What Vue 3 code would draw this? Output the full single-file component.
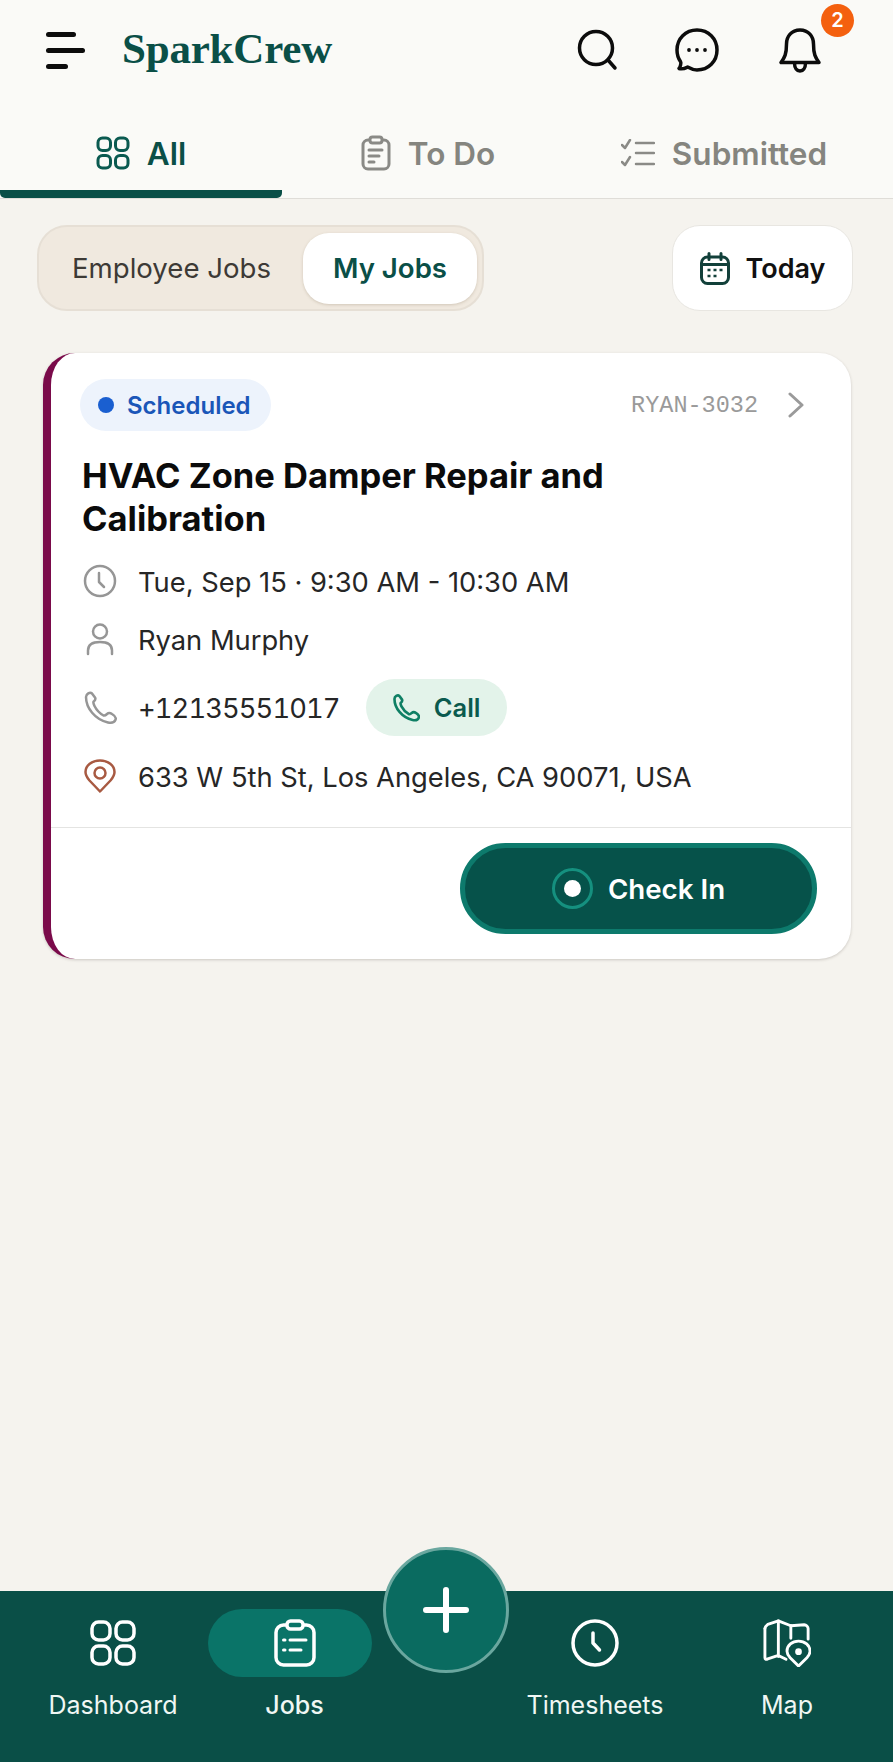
<template>
	<div class="app">
		<header class="header">
			<div class="burger"><span></span><span></span><span></span></div>
			<div class="logo">SparkCrew</div>
			<div class="header-icons">
				<svg width="46" height="46" viewBox="0 0 46 46" class="ic-black">
					<circle cx="21" cy="21" r="16.500" />
					<path d="M33 33l7 8" />
				</svg>
				<svg width="46" height="46" viewBox="0 0 46 46" class="ic-black">
					<path d="M23 3C11.500 3 3 11.500 3 23c0 4.500 1.300 8.500 3.600 11.800.8 1.200-.4 5.300-1.600 6.700 2.600.9 7-.6 8.600-1.400C16.400 41.700 19.600 43 23 43c11.500 0 20-8.500 20-20S34.500 3 23 3z" />
					<circle class="dot" cx="15" cy="23" r="1.900" />
					<circle class="dot" cx="23" cy="23" r="1.900" />
					<circle class="dot" cx="31" cy="23" r="1.900" />
				</svg>
				<div class="bell">
					<svg width="46" height="46" viewBox="0 0 46 46" class="ic-black">
						<path d="M23 3c-8.500 0-13.500 6.500-13.500 14 0 10-1.800 13.500-5.500 18.500h38C38.300 30.500 36.500 27 36.500 17 36.500 9.500 31.500 3 23 3z" />
						<path d="M17.500 36c0 5 2.500 8 5.500 8s5.500-3 5.500-8" />
					</svg>
					<span class="bell-count">2</span>
				</div>
			</div>
		</header>

		<nav class="tabs">
			<div class="tab tab-active">
				<svg width="34" height="34" viewBox="0 0 34 34" class="ic-green">
					<rect x="2" y="2" width="12.500" height="12.500" rx="4.500" />
					<rect x="19.500" y="2" width="12.500" height="12.500" rx="4.500" />
					<rect x="2" y="19.500" width="12.500" height="12.500" rx="4.500" />
					<rect x="19.500" y="19.500" width="12.500" height="12.500" rx="4.500" />
				</svg>
				All
			</div>
			<div class="tab">
				<svg width="30" height="36" viewBox="0 0 30 36" class="ic-grey">
					<rect x="2" y="5" width="26" height="29" rx="5" />
					<rect class="clip" x="9" y="2" width="12" height="6" rx="2.500" />
					<path d="M8 15h13M8 21h10M8 27h5" />
				</svg>
				To Do
			</div>
			<div class="tab">
				<svg width="34" height="28" viewBox="0 0 34 28" class="ic-grey thin">
					<path d="M1 6l3 3 5-8M1 23l3 3 5-8M15 4h18M15 14h18M15 25h18" />
				</svg>
				Submitted
			</div>
		</nav>

		<main class="content">
			<div class="filters">
				<div class="segment">
					<div class="seg-item">Employee Jobs</div>
					<div class="seg-item seg-active">My Jobs</div>
				</div>
				<button class="today">
					<svg width="30" height="33" viewBox="0 0 30 33" class="ic-dark">
						<rect x="1.500" y="5" width="27" height="26.500" rx="6" />
						<path d="M1.500 12.500h27M9 1.500v6M21 1.500v6" />
						<path class="sq" d="M7.500 18h3M13.500 18h3M19.500 18h3M7.500 24h3M13.500 24h3" />
					</svg>
					Today
				</button>
			</div>

			<section class="card">
				<div class="card-body">
					<div class="card-top">
						<span class="status"><i></i>Scheduled</span>
						<span class="job-id">RYAN-3032</span>
						<svg width="18" height="26" viewBox="0 0 18 26" class="chev">
							<path d="M3 2l12 11L3 24" />
						</svg>
					</div>
					<h2 class="title">HVAC Zone Damper Repair and<br />Calibration</h2>
					<div class="rows">
						<div class="row">
							<svg width="34" height="34" viewBox="0 0 34 34" class="ic-row">
								<circle cx="17" cy="17" r="15" />
								<path d="M16 9v9l5 5" />
							</svg>
							<span>Tue, Sep 15 · 9:30 AM - 10:30 AM</span>
						</div>
						<div class="row">
							<svg width="34" height="34" viewBox="0 0 34 34" class="ic-row">
								<circle cx="17" cy="9.500" r="7" />
								<path d="M5 32v-3.500C5 22.500 10 20 17 20s12 2.500 12 8.500V32" />
							</svg>
							<span>Ryan Murphy</span>
						</div>
						<div class="row">
							<svg width="34" height="34" viewBox="0 0 34 34" class="ic-row">
								<path d="M3 6c0-3 4-5.500 6-3.500l3 4c1 1.500 0 3-1.500 4.300C10 12 10.500 13 11.500 15c2.300 4.500 5.500 7.500 9 9.500 1.500.5 2.500-.5 3.500-1.500 1.500-1.300 3-1.300 5 0 3 1.800 4.500 3.500 3.500 5.800-1 2.500-4 3.500-7.500 2.700C12 28.500 3 17 3 6z" />
							</svg>
							<span class="phone">+12135551017</span>
							<button class="call">
								<svg width="28" height="28" viewBox="0 0 34 34" class="ic-teal">
									<path d="M3 6c0-3 4-5.500 6-3.500l3 4c1 1.500 0 3-1.500 4.300C10 12 10.500 13 11.500 15c2.300 4.500 5.500 7.500 9 9.500 1.500.5 2.500-.5 3.500-1.500 1.500-1.300 3-1.300 5 0 3 1.800 4.500 3.500 3.500 5.800-1 2.500-4 3.500-7.500 2.700C12 28.500 3 17 3 6z" />
								</svg>
								Call
							</button>
						</div>
						<div class="row">
							<svg width="34" height="34" viewBox="0 0 34 34" class="ic-row ic-pin">
								<path d="M17 32.500L6.500 21.500C3.500 18 2.500 15.500 2.500 13 2.500 6.500 9 1.500 17 1.500S31.500 6.500 31.500 13c0 2.500-1 5-4 8.500z" />
								<circle cx="17" cy="14" r="5.500" />
							</svg>
							<span>633 W 5th St, Los Angeles, CA 90071, USA</span>
						</div>
					</div>
				</div>
				<div class="card-foot">
					<button class="checkin">
						<span class="radio"><i></i></span>
						Check In
					</button>
				</div>
			</section>
		</main>

		<footer class="bottom">
			<div class="nav-item">
				<div class="nav-icon">
					<svg width="46" height="46" viewBox="0 0 46 46" class="ic-white">
						<rect x="2" y="2" width="18" height="18" rx="6.500" />
						<rect x="26" y="2" width="18" height="18" rx="6.500" />
						<rect x="2" y="26" width="18" height="18" rx="6.500" />
						<rect x="26" y="26" width="18" height="18" rx="6.500" />
					</svg>
				</div>
				<span>Dashboard</span>
			</div>
			<div class="nav-item nav-active">
				<div class="nav-icon nav-pill">
					<svg width="42" height="48" viewBox="0 0 42 48" class="ic-white">
						<rect x="2" y="6" width="38" height="40" rx="7.500" />
						<rect class="clip" x="13" y="2" width="16" height="8" rx="3.500" />
						<path class="thinner" d="M16 21h16M16 31h11" />
						<path class="thinner" d="M9.500 21h1.500M9.500 31h1.500" />
					</svg>
				</div>
				<span>Jobs</span>
			</div>
			<div class="nav-gap"></div>
			<div class="nav-item">
				<div class="nav-icon">
					<svg width="48" height="48" viewBox="0 0 48 48" class="ic-white">
						<circle cx="24" cy="24" r="22" />
						<path d="M22 14v10l6.500 7" />
					</svg>
				</div>
				<span>Timesheets</span>
			</div>
			<div class="nav-item">
				<div class="nav-icon">
					<svg width="48" height="48" viewBox="0 0 50 50" class="ic-white map">
						<path d="M2 10c0-2 1-3 3-4.500L16 2l13 5 14-1c2 0 4 2 4 4v11" />
						<path d="M16 2v37M29 7v13M2 10v30c0 2 1 2.500 3 1.500L16 38l8 4" />
						<path d="M37 49L28 40c-2-2.500-3-4.500-3-6.500C25 27.500 30.500 23 37 23s12 4.500 12 10.500c0 2-1 4-3 6.500z" />
						<circle class="dot" cx="37" cy="34" r="3.500" />
					</svg>
				</div>
				<span>Map</span>
			</div>
			<button class="fab">
				<svg width="46" height="46" viewBox="0 0 46 46">
					<path d="M23 3v40M3 23h40" />
				</svg>
			</button>
		</footer>
	</div>
</template>

<script setup>
</script>

<style>
html,
body {
	margin: 0;
	background: #f5f3ee;
}
</style>

<style scoped>
.app {
	display: flex;
	flex-direction: column;
	min-height: 1762px;
	font-family: Inter, "Noto Sans", sans-serif;
	color: #222;
	background: #f5f3ee;
}

svg {
	display: block;
	flex: none;
	fill: none;
	stroke-linecap: round;
	stroke-linejoin: round;
}

button {
	font-family: inherit;
	border: 0;
	cursor: pointer;
}

.ic-black { stroke: #0c0c0c; stroke-width: 3.500; }
.ic-black .dot { fill: #0c0c0c; stroke: none; }
.ic-green { stroke: #0a5a50; stroke-width: 3; }
.ic-grey { stroke: #8a8a86; stroke-width: 3; }
.ic-grey .clip { fill: #fafaf7; }
.ic-grey.thin { stroke-width: 2.500; }
.ic-dark { stroke: #12403a; stroke-width: 3; }
.ic-dark .sq { stroke-width: 2.500; stroke-linecap: butt; }
.ic-row { stroke: #969696; stroke-width: 2.500; }
.ic-pin { stroke: #a85a42; }
.ic-teal { stroke: #0e7f64; stroke-width: 3.200; }
.ic-white { stroke: #fff; stroke-width: 3.500; }
.ic-white .clip { fill: #0a7468; }
.ic-white .thinner { stroke-width: 3; }
.ic-white .dot { fill: #fff; stroke: none; }
.ic-white.map { stroke-width: 3; }

.header {
	display: flex;
	align-items: center;
	height: 100px;
	padding-left: 46px;
	background: #fafaf7;
}

.burger {
	display: flex;
	flex-direction: column;
	gap: 11px;
	width: 39px;
}

.burger span {
	display: block;
	height: 5px;
	border-radius: 3px;
	background: #0c0c0c;
}

.burger span:nth-child(1) { width: 30px; }
.burger span:nth-child(3) { width: 22px; }

.logo {
	margin-left: 37px;
	margin-bottom: 4px;
	font-family: "Liberation Serif", serif;
	font-size: 43px;
	font-weight: 700;
	letter-spacing: -0.2px;
	color: #0a4f47;
}

.header-icons {
	display: flex;
	align-items: center;
	gap: 53px;
	margin-left: auto;
	margin-right: 70px;
}

.bell {
	position: relative;
	margin-left: 4px;
}

.bell-count {
	position: absolute;
	top: -23px;
	right: -31px;
	width: 33px;
	height: 33px;
	border-radius: 50%;
	background: #f4600f;
	color: #fff;
	font-size: 20px;
	font-weight: 600;
	line-height: 33px;
	text-align: center;
}

.tabs {
	display: grid;
	grid-template-columns: 282px 292px 300px;
	height: 98px;
	background: #fafaf7;
	border-bottom: 1px solid #dfddd8;
}

.tab {
	display: flex;
	align-items: center;
	justify-content: center;
	gap: 17px;
	padding-top: 8px;
	font-size: 31.500px;
	font-weight: 600;
	color: #85857f;
	box-sizing: border-box;
}

.tab-active {
	color: #0a4f47;
	border-bottom: 8px solid #0a4f47;
	border-radius: 0 0 5px 5px;
	padding-top: 16px;
}

.content {
	flex: 1;
	padding: 26px 40px 0 37px;
}

.filters {
	display: flex;
	align-items: center;
	justify-content: space-between;
}

.segment {
	display: flex;
	align-items: center;
	justify-content: space-between;
	box-sizing: border-box;
	width: 447px;
	height: 86px;
	padding: 0 5px 0 33px;
	border: 2px solid #e6dfd5;
	border-radius: 30px;
	background: #f0e9df;
}

.seg-item {
	font-size: 27.600px;
	color: #3d3a36;
}

.seg-active {
	display: flex;
	align-items: center;
	justify-content: center;
	width: 174px;
	height: 71px;
	border-radius: 26px;
	background: #fff;
	box-shadow: 0 1px 3px rgba(120, 100, 70, 0.25);
	font-weight: 600;
	color: #0a4f47;
}

.today {
	display: flex;
	align-items: center;
	justify-content: center;
	gap: 16px;
	box-sizing: border-box;
	width: 181px;
	height: 86px;
	border: 1px solid #e8e6e1;
	border-radius: 28px;
	background: #fff;
	font-size: 27px;
	font-weight: 600;
	color: #111;
}

.card {
	margin: 42px 2px 0 6px;
	border-left: 8px solid #7a0a4a;
	border-radius: 32px;
	background: #fff;
	box-shadow: 0 1px 3px rgba(60, 50, 40, 0.22);
}

.card-body {
	padding: 26px 34px 33px 29px;
	border-bottom: 1px solid #e4e4e2;
}

.card-top {
	display: flex;
	align-items: center;
}

.status {
	display: flex;
	align-items: center;
	gap: 13px;
	height: 52px;
	padding: 0 20px 0 18px;
	border-radius: 26px;
	background: #edf3fc;
	font-size: 24px;
	font-weight: 600;
	color: #1a56b8;
}

.status i {
	width: 16px;
	height: 16px;
	border-radius: 50%;
	background: #1a5fd0;
}

.job-id {
	margin-left: auto;
	font-family: "Liberation Mono", monospace;
	font-size: 23.500px;
	color: #9a9a9a;
}

.chev {
	margin-left: 29px;
	margin-right: 12px;
	stroke: #9a9a9a;
	stroke-width: 3;
}

.title {
	margin: 23px 0 23px 2px;
	font-size: 34.500px;
	font-weight: 700;
	line-height: 43px;
	color: #0b0b0b;
}

.rows {
	display: flex;
	flex-direction: column;
	gap: 22px;
}

.row {
	display: flex;
	align-items: center;
	gap: 21px;
	min-height: 36px;
	padding-left: 3px;
	font-size: 27.300px;
	color: #262626;
}

.row > span {
	padding-top: 2px;
}

.phone {
	font-variant-numeric: tabular-nums;
	letter-spacing: -0.900px;
}

.call {
	display: flex;
	align-items: center;
	justify-content: center;
	gap: 14px;
	width: 141px;
	height: 57px;
	margin-left: 5px;
	border-radius: 29px;
	background: #e3f3ea;
	font-size: 25.500px;
	font-weight: 600;
	color: #0a5a4e;
}

.card-foot {
	display: flex;
	justify-content: flex-end;
	padding: 15px 34px 25px 0;
}

.checkin {
	display: flex;
	align-items: center;
	justify-content: center;
	gap: 15px;
	box-sizing: border-box;
	width: 357px;
	height: 91px;
	border: 5px solid #0d7a6c;
	border-radius: 46px;
	background: #06524a;
	font-size: 27.700px;
	font-weight: 600;
	color: #fff;
}

.radio {
	display: flex;
	align-items: center;
	justify-content: center;
	box-sizing: border-box;
	width: 41px;
	height: 41px;
	border: 3px solid #15907f;
	border-radius: 50%;
}

.radio i {
	width: 17px;
	height: 17px;
	border-radius: 50%;
	background: #fff;
}

.bottom {
	position: relative;
	display: grid;
	grid-template-columns: 190px 164px 133px 180px 204px;
	align-items: start;
	box-sizing: border-box;
	height: 171px;
	padding: 18px 0 0 18px;
	background: #0a4f47;
}

.nav-item {
	display: flex;
	flex-direction: column;
	align-items: center;
	font-size: 25px;
	color: #f0f7f4;
}

.nav-icon {
	display: flex;
	align-items: center;
	justify-content: center;
	height: 68px;
}

.nav-item span {
	margin-top: 13px;
	line-height: 30px;
}

.nav-pill {
	box-sizing: border-box;
	width: 164px;
	padding-left: 10px;
	border-radius: 34px;
	background: #0a7468;
}

.nav-active {
	font-weight: 500;
}

.nav-active span {
	padding-left: 9px;
}

.fab {
	position: absolute;
	top: -44px;
	left: 383px;
	display: flex;
	align-items: center;
	justify-content: center;
	box-sizing: border-box;
	width: 126px;
	height: 126px;
	border: 3px solid #6aa79f;
	border-radius: 50%;
	background: #0a6b60;
	padding: 0;
}

.fab svg {
	stroke: #fff;
	stroke-width: 6;
}
</style>
